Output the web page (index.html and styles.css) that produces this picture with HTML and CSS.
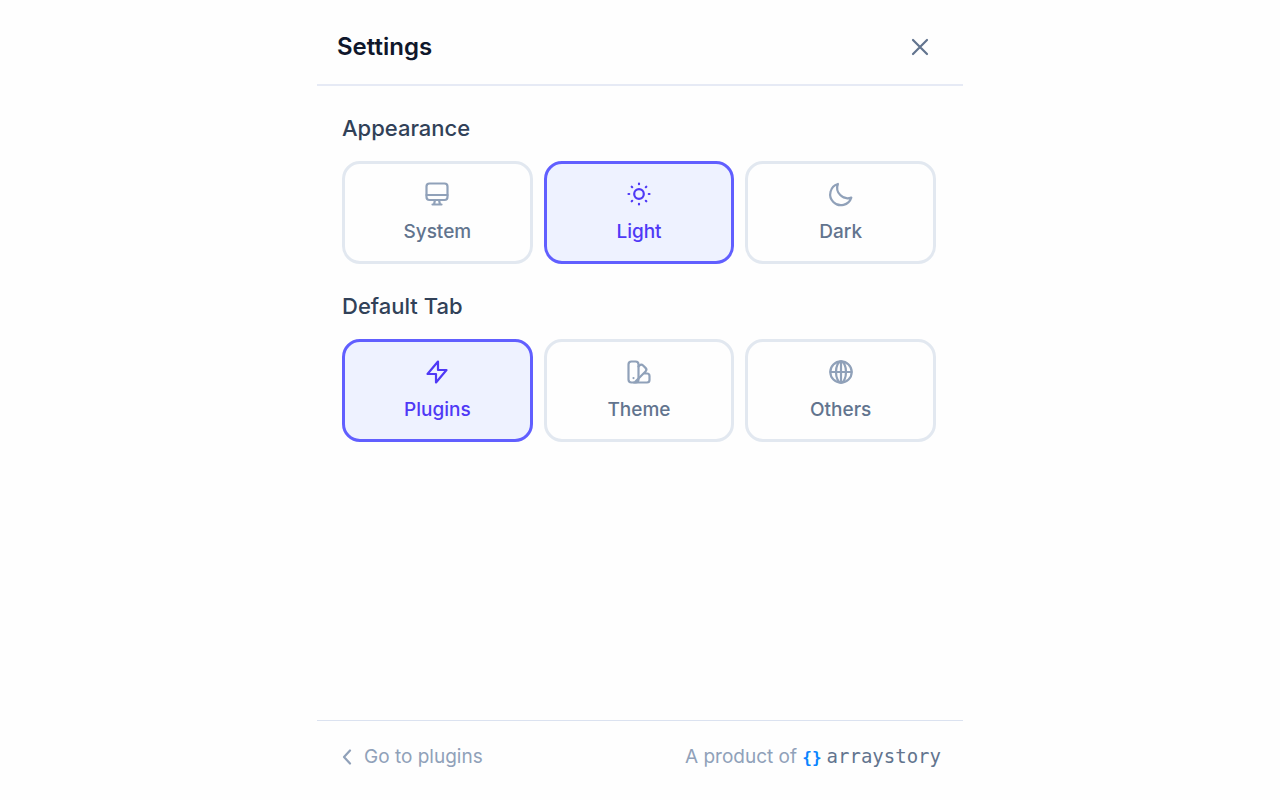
FILE: index.html
```
<!DOCTYPE html>
<html lang="en">

<head>
    <meta charset="UTF-8">
    <meta name="viewport" content="width=device-width, initial-scale=1.0">
    <title>Settings</title>
    <link rel="stylesheet" href="styles.css">
</head>

<body>
    <div class="panel">
        <header class="panel-header">
            <h1>Settings</h1>
            <button class="close-btn" type="button" aria-label="Close">
                <svg class="icon" viewBox="0 0 24 24"><path d="M5 5l14 14M19 5L5 19"/></svg>
            </button>
        </header>

        <main class="panel-body">
            <fieldset class="setting">
                <legend>Appearance</legend>
                <div class="options">
                    <label class="option">
                        <input type="radio" name="appearance" value="system">
                        <svg class="icon" viewBox="0 0 24 24"><rect x="1.500" y="1.500" width="21" height="16.500" rx="3"/><path d="M1.500 13h21M10 18l-1 4.500M14 18l1 4.500M7.500 22.500h9"/></svg>
                        <span>System</span>
                    </label>
                    <label class="option">
                        <input type="radio" name="appearance" value="light" checked>
                        <svg class="icon" viewBox="0 0 24 24"><circle cx="12" cy="12" r="4.800"/><path d="M12 1.500v.7M12 21.800v.7M1.500 12h.7M21.800 12h.7M4.700 4.700l.5.5M18.800 18.800l.5.5M4.700 19.300l.5-.5M18.800 5.200l.5-.5"/></svg>
                        <span>Light</span>
                    </label>
                    <label class="option">
                        <input type="radio" name="appearance" value="dark">
                        <svg class="icon" viewBox="0 0 24 24"><path d="M22.300 15.600A10.800 10.800 0 1 1 8.900 2a10.500 10.500 0 0 0 13.400 13.600z"/></svg>
                        <span>Dark</span>
                    </label>
                </div>
            </fieldset>

            <fieldset class="setting">
                <legend>Default Tab</legend>
                <div class="options">
                    <label class="option">
                        <input type="radio" name="default-tab" value="plugins" checked>
                        <svg class="icon" viewBox="0 0 24 24"><path d="M13 1.500L2.500 14H11v8.500L21.500 10H13z"/></svg>
                        <span>Plugins</span>
                    </label>
                    <label class="option">
                        <input type="radio" name="default-tab" value="theme">
                        <svg class="icon" viewBox="0 0 24 24"><rect x="1.500" y="1.500" width="10" height="21" rx="3"/><path d="M11.500 6.500l1-1q1.800-1.800 3.600 0l2.400 2.400q1.800 1.800 0 3.600L8.500 21.500M16.500 13.500H20q2.500 0 2.500 2.500v4q0 2.500-2.500 2.500H7M6.500 18v.1"/></svg>
                        <span>Theme</span>
                    </label>
                    <label class="option">
                        <input type="radio" name="default-tab" value="others">
                        <svg class="icon" viewBox="0 0 24 24"><circle cx="12" cy="12" r="10.700"/><ellipse cx="12" cy="12" rx="5" ry="10.700"/><path d="M1.500 12h21M12 1.500v21"/></svg>
                        <span>Others</span>
                    </label>
                </div>
            </fieldset>
        </main>

        <footer class="panel-footer">
            <a class="back-link" href="#plugins">
                <svg class="chevron" viewBox="0 0 10 16"><path d="M8 1.500L2 8l6 6.500"/></svg>
                Go to plugins
            </a>
            <p class="credit">A product of <a href="#arraystory"><b>{}</b><span>arraystory</span></a></p>
        </footer>
    </div>
</body>

</html>
```

FILE: styles.css
```
* {
    margin: 0;
    padding: 0;
    box-sizing: border-box;
}

body {
    font-family: 'Inter', system-ui, sans-serif;
    background: #fefefe;
    color: #0f172b;
}

.panel {
    display: flex;
    flex-direction: column;
    max-width: 646px;
    min-height: 100vh;
    margin: 0 auto;
}

.panel-header {
    display: flex;
    justify-content: space-between;
    align-items: center;
    padding: 25px 31px 15px 20px;
    border-bottom: 2px solid #e6eaf5;
}

.panel-header h1 {
    font-size: 24px;
    line-height: 44px;
    font-weight: 600;
}

.close-btn {
    display: flex;
    border: none;
    background: none;
    color: #62748e;
    cursor: pointer;
}

.icon {
    width: 24px;
    height: 24px;
    overflow: visible;
}

svg {
    fill: none;
    stroke: currentColor;
    stroke-width: 2.2;
    stroke-linecap: round;
    stroke-linejoin: round;
}

.panel-body {
    flex: 1;
    display: flex;
    flex-direction: column;
    gap: 26px;
    padding: 26px 27px 26px 25px;
}

.setting {
    border: none;
}

.setting legend {
    margin-bottom: 17px;
    font-size: 22px;
    line-height: 32px;
    font-weight: 500;
    color: #314158;
}

.options {
    display: grid;
    grid-template-columns: repeat(3, 1fr);
    gap: 11px;
}

.option {
    display: flex;
    flex-direction: column;
    align-items: center;
    gap: 12px;
    padding: 18px 16px 15px;
    border: 3px solid #e2e8f0;
    border-radius: 18px;
    font-size: 19px;
    line-height: 28px;
    font-weight: 500;
    color: #62748e;
    cursor: pointer;
}

.option .icon {
    color: #90a1b9;
}

.option input {
    position: absolute;
    opacity: 0;
}

.option:has(input:checked) {
    border-color: #615fff;
    background: #eef2ff;
    color: #4f39f6;
}

.option:has(input:checked) .icon {
    color: #4f39f6;
}

.panel-footer {
    display: flex;
    justify-content: space-between;
    align-items: center;
    padding: 20px 22px 27px 25px;
    border-top: 1px solid #dbe2f0;
    font-size: 19px;
    line-height: 30px;
    color: #90a1b9;
}

.panel-footer a {
    color: inherit;
    text-decoration: none;
}

.back-link {
    display: flex;
    align-items: center;
    gap: 12px;
}

.chevron {
    width: 10px;
    height: 16px;
}

.credit a {
    font-family: 'DejaVu Sans Mono', monospace;
}

.credit b {
    margin-right: 5px;
    font-size: 16px;
    color: #0a84ff;
}

.credit span {
    color: #62748e;
}
```
